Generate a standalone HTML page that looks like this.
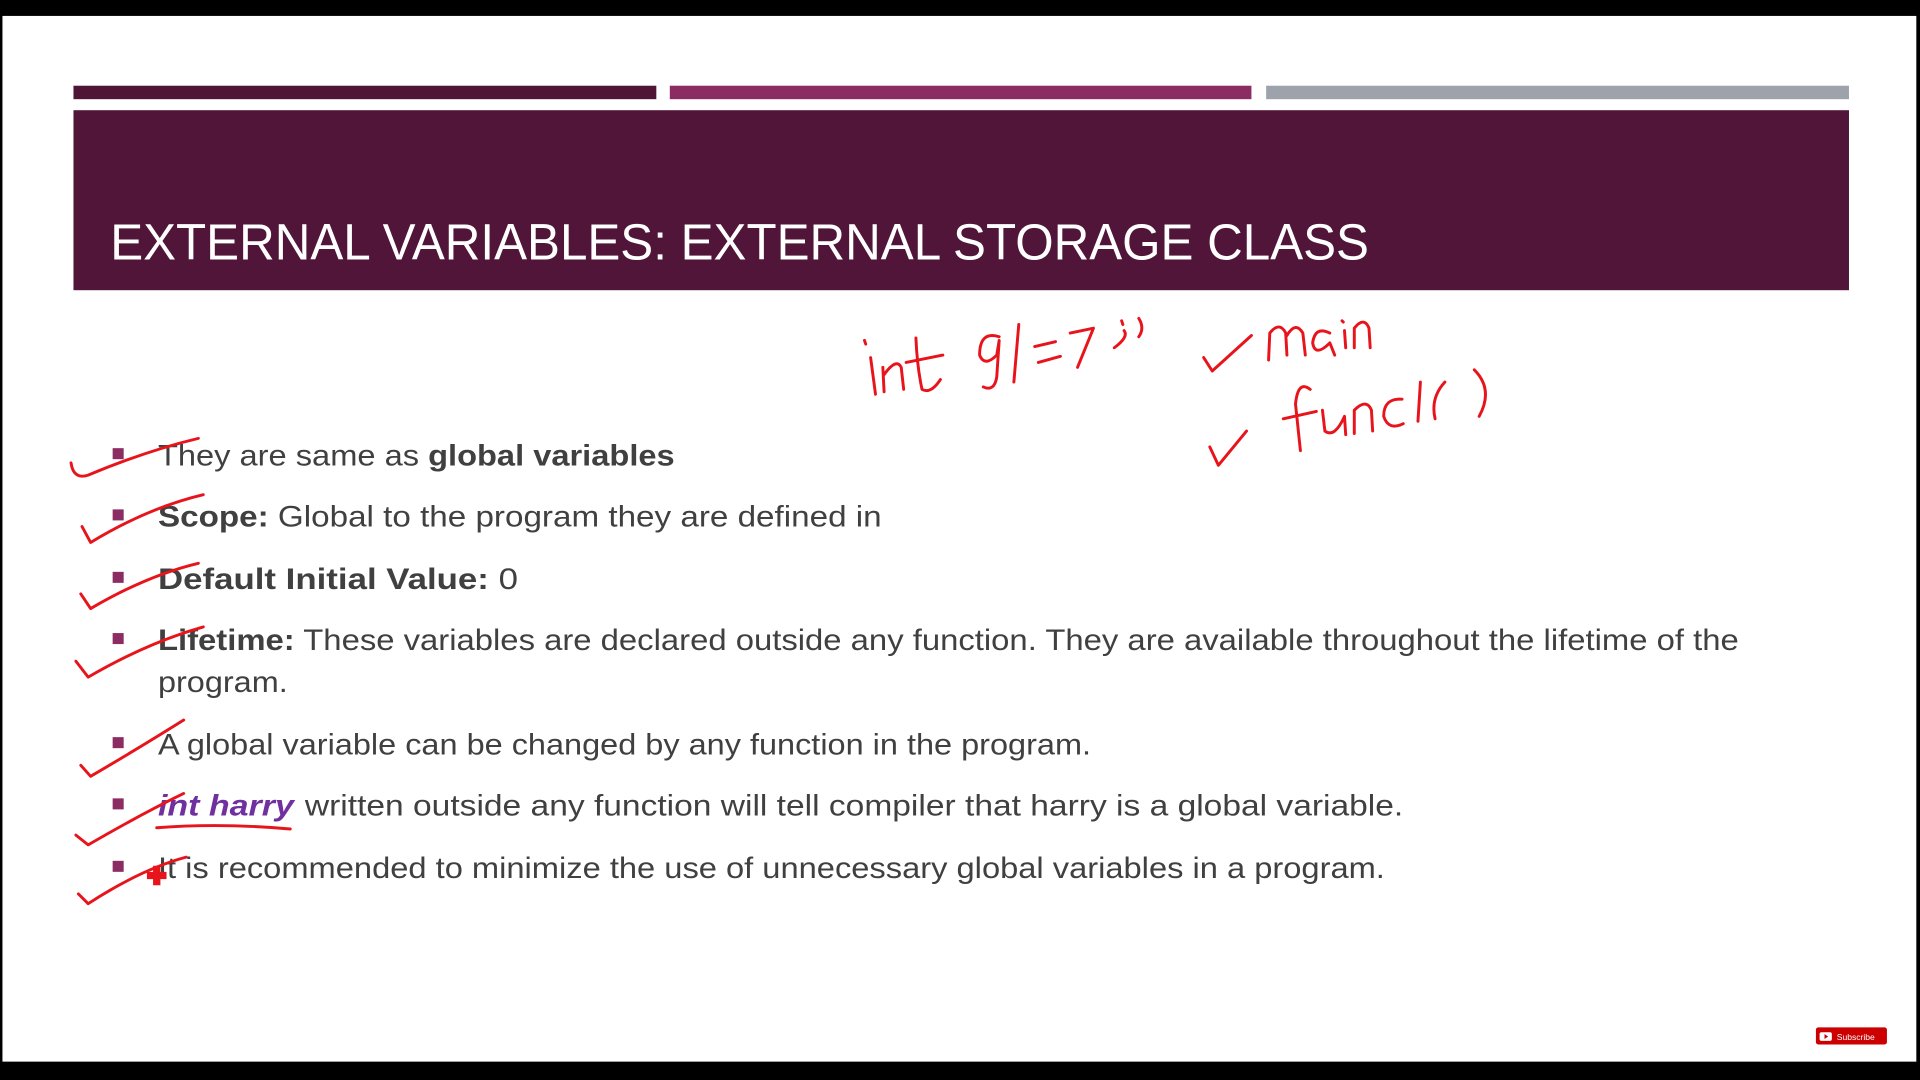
<!DOCTYPE html>
<html><head><meta charset="utf-8"><style>
html,body{margin:0;padding:0;background:#000;width:1920px;height:1080px;overflow:hidden}
svg{display:block}
</style></head><body>
<svg width="1920" height="1080" viewBox="0 0 1568 882" xmlns="http://www.w3.org/2000/svg">
<rect x="0" y="0" width="1568" height="882" fill="#000"/>
<rect x="2" y="13" width="1563" height="854" fill="#fff"/>
<rect x="60" y="70" width="476" height="11" fill="#4f1535"/>
<rect x="547" y="70" width="475" height="11" fill="#8b2c63"/>
<rect x="1034" y="70" width="476" height="11" fill="#9ea3ab"/>
<rect x="60" y="90" width="1450" height="147" fill="#501538"/>
<text x="90" y="212" font-family="Liberation Sans, sans-serif" font-size="42" fill="#fff" textLength="1028" lengthAdjust="spacingAndGlyphs">EXTERNAL VARIABLES: EXTERNAL STORAGE CLASS</text>
<g fill="#8b2c63">
<rect x="92" y="366" width="9" height="9"/><rect x="92" y="416" width="9" height="9"/><rect x="92" y="467" width="9" height="9"/><rect x="92" y="517" width="9" height="9"/><rect x="92" y="602" width="9" height="9"/><rect x="92" y="652" width="9" height="9"/><rect x="92" y="703" width="9" height="9"/>
</g>
<g font-family="Liberation Sans, sans-serif" font-size="24" fill="#404040">
<text x="129" y="380" textLength="422" lengthAdjust="spacingAndGlyphs">They are same as <tspan font-weight="bold">global variables</tspan></text>
<text x="129" y="430" textLength="591" lengthAdjust="spacingAndGlyphs"><tspan font-weight="bold">Scope:</tspan> Global to the program they are defined in</text>
<text x="129" y="481" textLength="294" lengthAdjust="spacingAndGlyphs"><tspan font-weight="bold">Default Initial Value:</tspan> 0</text>
<text x="129" y="531" textLength="1291" lengthAdjust="spacingAndGlyphs"><tspan font-weight="bold">Lifetime:</tspan> These variables are declared outside any function. They are available throughout the lifetime of the</text>
<text x="129" y="565" textLength="106" lengthAdjust="spacingAndGlyphs">program.</text>
<text x="129" y="616" textLength="762" lengthAdjust="spacingAndGlyphs">A global variable can be changed by any function in the program.</text>
<text x="129" y="666" textLength="111" lengthAdjust="spacingAndGlyphs" fill="#7030a0" font-weight="bold" font-style="italic">int harry</text>
<text x="249" y="666" textLength="897" lengthAdjust="spacingAndGlyphs">written outside any function will tell compiler that harry is a global variable.</text>
<text x="129" y="717" textLength="1002" lengthAdjust="spacingAndGlyphs">It is recommended to minimize the use of unnecessary global variables in a program.</text>
</g>
<g fill="none" stroke="#e8141b" stroke-width="2.4" stroke-linecap="round" stroke-linejoin="round">
<path d="M58 378 Q60 392 72 388 Q120 368 162 358"/>
<path d="M67 430 L74 443 Q120 415 166 404"/>
<path d="M66 485 L74 497 Q120 470 162 460"/>
<path d="M62 540 L72 553 Q120 525 166 512"/>
<path d="M66 625 L74 634 Q115 610 150 588"/>
<path d="M62 682 L72 690 Q115 665 150 648"/>
<path d="M64 730 L72 738 Q115 710 152 700"/>
<path d="M128 676 Q180 672 237 677"/>
<!-- int g1=7; -->
<path d="M706 278 L707 281"/>
<path d="M711 292 L715 322"/>
<path d="M722 320 L721 300 M722 306 Q732 292 736 300 L738 318"/>
<path d="M748 276 Q749 300 753 318 Q760 322 768 310"/>
<path d="M740 296 L770 290"/>
<path d="M816 275 Q800 270 800 290 Q804 300 814 290 L816 278 L814 308 Q812 320 803 316"/>
<path d="M832 265 L828 312"/>
<path d="M845 283 L862 279 M848 296 L866 291"/>
<path d="M874 272 L893 268 L880 300"/>
<path d="M916 262 L917 265 M918 270 Q922 275 910 284 M930 260 Q935 268 930 275"/>
<!-- main -->
<path d="M983 292 L990 303 L1022 274"/>
<path d="M1036 294 L1037 272 Q1045 262 1050 272 L1051 290 M1051 274 Q1058 262 1064 272 L1066 290"/>
<path d="M1086 272 Q1074 266 1072 280 Q1074 292 1086 280 L1090 290"/>
<path d="M1098 270 L1099 284 M1096 262 L1097 263"/>
<path d="M1106 284 L1106 268 Q1114 258 1118 268 L1119 284"/>
<!-- func() -->
<path d="M988 365 L995 380 L1018 352"/>
<path d="M1070 318 Q1060 310 1058 330 L1062 368 M1048 342 L1075 336"/>
<path d="M1080 335 L1082 352 Q1090 358 1098 340 L1099 355"/>
<path d="M1106 354 L1106 335 Q1116 325 1120 335 L1121 352"/>
<path d="M1145 326 Q1130 325 1130 340 Q1134 352 1146 346"/>
<path d="M1160 312 L1158 344"/>
<path d="M1180 312 Q1168 325 1172 342"/>
<path d="M1204 302 Q1220 318 1208 340"/>
</g>
<path d="M125 707 h6 v5 h5 v6 h-5 v5 h-6 v-5 h-5 v-6 h5 z" fill="#e8141b"/>
<rect x="1483" y="839" width="58" height="14" rx="2" fill="#cc0000"/>
<rect x="1486" y="843" width="10" height="7" rx="1.5" fill="#fff"/>
<path d="M1490 844.5 L1493 846.5 L1490 848.5 z" fill="#cc0000"/>
<text x="1500" y="849.5" font-family="Liberation Sans, sans-serif" font-size="7" fill="#fff">Subscribe</text>
</svg>
</body></html>
